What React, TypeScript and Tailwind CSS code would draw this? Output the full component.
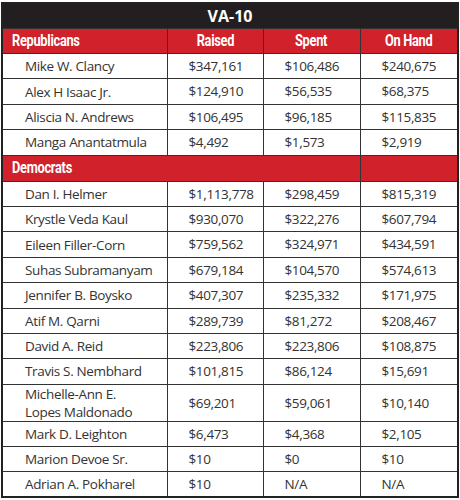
const republicans = [
  ['Mike W. Clancy', '$347,161', '$106,486', '$240,675'],
  ['Alex H Isaac Jr.', '$124,910', '$56,535', '$68,375'],
  ['Aliscia N. Andrews', '$106,495', '$96,185', '$115,835'],
  ['Manga Anantatmula', '$4,492', '$1,573', '$2,919'],
]

const democrats = [
  ['Dan I. Helmer', '$1,113,778', '$298,459', '$815,319'],
  ['Krystle Veda Kaul', '$930,070', '$322,276', '$607,794'],
  ['Eileen Filler-Corn', '$759,562', '$324,971', '$434,591'],
  ['Suhas Subramanyam', '$679,184', '$104,570', '$574,613'],
  ['Jennifer B. Boysko', '$407,307', '$235,332', '$171,975'],
  ['Atif M. Qarni', '$289,739', '$81,272', '$208,467'],
  ['David A. Reid', '$223,806', '$223,806', '$108,875'],
  ['Travis S. Nembhard', '$101,815', '$86,124', '$15,691'],
  ['Michelle-Ann E.|Lopes Maldonado', '$69,201', '$59,061', '$10,140'],
  ['Mark D. Leighton', '$6,473', '$4,368', '$2,105'],
  ['Marion Devoe Sr.', '$10', '$0', '$10'],
  ['Adrian A. Pokharel', '$10', 'N/A', 'N/A'],
]

const cell = 'border-[1.5px] border-[#333] px-0 align-middle'
const head = "text-white font-bold text-[16px] font-['Roboto',_sans-serif]"

function H({ children, left }: { children: string; left?: boolean }) {
  return (
    <span className={`inline-block scale-x-[0.8] ${left ? 'origin-left' : 'origin-center'}`}>
      {children}
    </span>
  )
}

function Row({ r }: { r: string[] }) {
  const tall = r[0].includes('|')
  return (
    <tr className={tall ? 'h-[37px]' : 'h-[25.4px]'}>
      <td className={`${cell} pl-[22px] leading-[18px]`}>
        {r[0].split('|').map(l => (
          <div key={l}>{l}</div>
        ))}
      </td>
      <td className={`${cell} pl-[21px]`}>{r[1]}</td>
      <td className={`${cell} pl-[21px]`}>{r[2]}</td>
      <td className={`${cell} pl-[21px]`}>{r[3]}</td>
    </tr>
  )
}

export default function App() {
  return (
    <div className="w-[460px] h-[500px] bg-white pt-[2px] pl-[1px]">
      <table className="w-[456px] table-fixed border-collapse border-2 border-[#222] text-[13.5px] text-[#333] font-['Open_Sans',_sans-serif] tracking-[-0.35px]">
        <colgroup>
          <col className="w-[165px]" />
          <col className="w-[96px]" />
          <col className="w-[97px]" />
          <col className="w-[98px]" />
        </colgroup>
        <tbody>
          <tr className="h-[25px] bg-[#231f20]">
            <td colSpan={4} className="text-center text-white font-bold text-[16px] tracking-normal">
              VA-10
            </td>
          </tr>
          <tr className="h-[25px] bg-[#d1222b]">
            <td className={`${cell} ${head} pl-[9px]`}>
              <H left>Republicans</H>
            </td>
            <td className={`${cell} ${head} text-center`}>
              <H>Raised</H>
            </td>
            <td className={`${cell} ${head} text-center`}>
              <H>Spent</H>
            </td>
            <td className={`${cell} ${head} text-center`}>
              <H>On Hand</H>
            </td>
          </tr>
          {republicans.map(r => (
            <Row key={r[0]} r={r} />
          ))}
          <tr className="h-[26px] bg-[#d1222b]">
            <td colSpan={3} className={`${cell} ${head} pl-[9px]`}>
              <H left>Democrats</H>
            </td>
            <td className={cell}></td>
          </tr>
          {democrats.map(r => (
            <Row key={r[0]} r={r} />
          ))}
        </tbody>
      </table>
    </div>
  )
}
